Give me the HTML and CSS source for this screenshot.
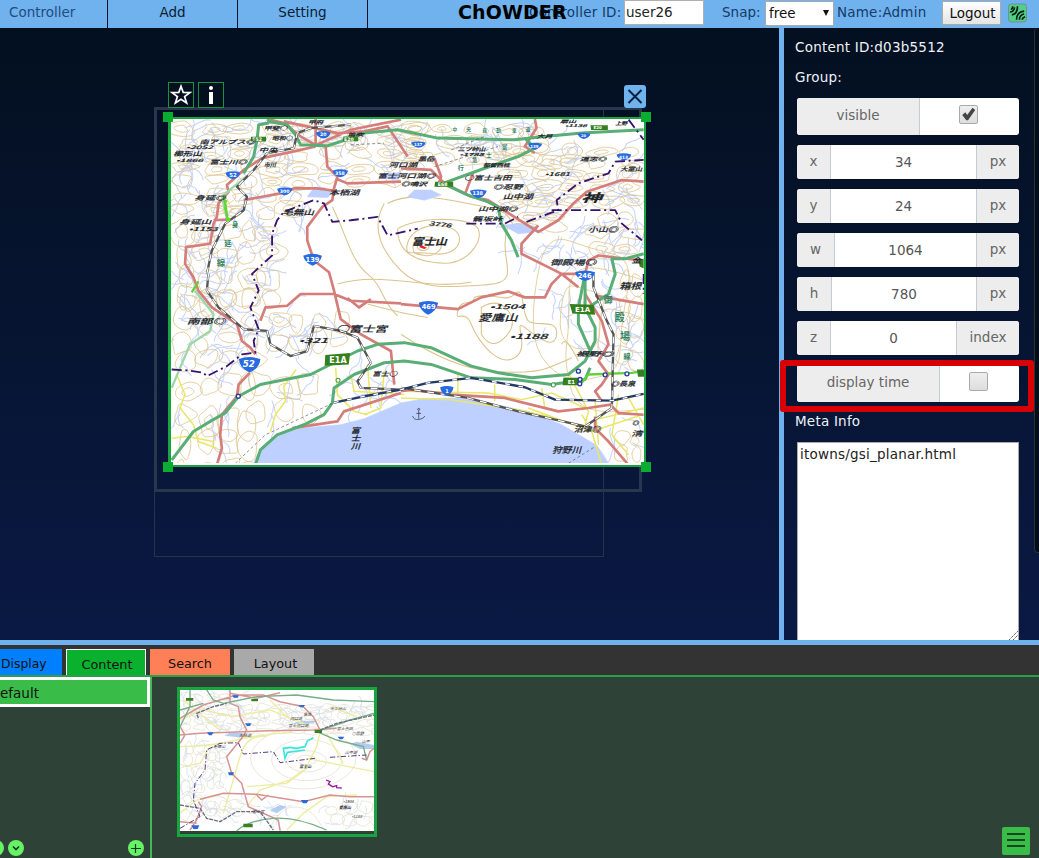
FILE: index.html
```html
<!DOCTYPE html>
<html lang="ja">
<head>
<meta charset="utf-8">
<title>ChOWDER</title>
<link rel="stylesheet" href="styles.css">
</head>
<body>
<div class="app">
  <header class="topbar">
    <nav class="menu">
      <span class="menu-item menu-first">Controller</span>
      <span class="menu-item">Add</span>
      <span class="menu-item">Setting</span>
    </nav>
    <h1 class="brand">ChOWDER</h1>
    <div class="tools">
      <span class="lbl lbl-id">Controller ID:</span>
      <span class="id-input">user26</span>
      <span class="lbl lbl-snap">Snap:</span>
      <span class="select"><span>free</span><i class="caret"></i></span>
      <span class="lbl lbl-name">Name:Admin</span>
      <span class="logout">Logout</span>
      <svg class="signal" viewBox="0 0 20 20"><rect x=".5" y=".5" width="19" height="19" rx="3" fill="#50cf87" stroke="#789"/><g fill="none" stroke="#061b12" stroke-width="1.7"><path d="M2 9Q6 9 7 4M3 6Q5 6 5 3M4 12Q10 11 10 3M9 17Q9 9 17 8M12 17Q12 12 17 11M15 17Q15 15 18 14"/></g></svg>
    </div>
  </header>

  <main class="main">
    <section class="stage">
      <div class="screen screen-thin"></div>
      <div class="screen screen-thick"></div>
      <div class="tool-icon star"><svg viewBox="0 0 24 24"><path d="M12 3.200 14.200 9.400 21 9.600 15.600 13.600 17.600 20 12 16.200 6.400 20 8.400 13.600 3 9.600 9.800 9.400Z" fill="none" stroke="#fff" stroke-width="1.7"/></svg></div>
      <div class="tool-icon info"><svg viewBox="0 0 24 24"><circle cx="12" cy="5" r="2" fill="#fff"/><rect x="10" y="9" width="4" height="12" fill="#fff"/></svg></div>
      <div class="close"><svg viewBox="0 0 22 22"><path d="M4.500 4.500 17.500 17.500M17.500 4.500 4.500 17.500" stroke="#08203f" stroke-width="2"/></svg></div>
      <div class="content-frame">
        <svg class="map" viewBox="63 138 1413 1026" preserveAspectRatio="none">
          <rect x="60" y="130" width="1430" height="1045" fill="#fff"/>
          <g id="streams" class="stream"></g>
          <g id="contours" class="contour"></g>
          <!-- contour rings of Mt. Fuji and its foothills -->
          <g class="contour big">
            <path d="M545 400C590 490 600 560 650 600S690 680 740 725M700 390C660 460 690 530 750 590S900 640 1010 632 1035 560 1070 455M740 465C800 430 930 430 970 455S960 570 880 568 740 540 740 465M768 515C775 470 830 445 890 460S930 550 850 540 765 550 768 515M786 520C785 490 830 480 860 500S850 550 820 545 786 540 786 520M798 520C805 505 825 505 832 517S810 538 798 520"/>
            <path d="M710 390C780 350 900 380 1000 400S1060 440 1100 470M560 630C700 590 820 650 960 625"/>
            <path d="M970 670C1020 650 1060 690 1090 660S1110 720 1130 740 1220 730 1215 780 1160 790 1120 760 1140 820 1090 850 980 800 960 750 910 750 920 710 960 700 970 670ZM990 700Q1040 670 1070 710T1060 790T990 780Z"/>
            <path d="M650 690Q760 720 830 730M750 780Q900 880 1020 890T1190 880T1260 850M1230 810Q1240 780 1280 860"/>
          </g>
          <!-- sea and lakes -->
          <g class="water">
            <path d="M305 1175 320 1140 345 1105 400 1075 450 1060 570 1050 640 1032 750 985 820 972 920 970 1010 985 1130 1010 1230 1050 1290 1085 1335 1112 1355 1140 1375 1175Z"/>
            <path d="M485 350 520 342 545 358 530 372 470 370ZM770 370 790 350 840 350 870 365 820 380ZM1055 455 1100 450 1160 460 1150 475 1100 480ZM685 302 750 298 740 318 690 315Z"/>
          </g>
          <g class="yellow">
            <path d="M80 900 105 960 90 1000 130 1050 145 1100 200 1120M65 1090 110 1085 190 1100M437 885 400 935 405 980 375 1020 360 1070M555 880 560 960 610 1010 650 1020M600 900 610 950 760 960M650 870 660 1000M700 890 690 1000 640 1020M750 950 1010 955 1110 975 1200 955 1300 1000M750 970 900 975 1100 1005 1230 1035M920 900 920 960M1030 930 1030 980M1170 940 1180 1000M1250 895 1310 1010 1300 1050M1330 980 1340 1110M1400 960 1380 1080 1430 1140M1430 970 1475 1050M1330 1035 1475 1000M1290 1020 1320 1070 1350 1170M1130 1000 1320 1070 1470 1020"/>
          </g>
          <g class="road">
            <path d="M350 138 400 150 450 190 495 216 600 170 750 140M495 138 495 216 525 220 530 280 560 310 550 345 545 380 515 400 470 460 470 500 490 560 535 595 550 650 570 735 630 780 720 830 730 930M495 220 450 230 335 255 280 290 230 335 235 355 205 390 200 430 190 450 180 510 108 520 105 570 130 610 145 650 185 700 260 750 275 800 300 820 315 840M230 438 190 440M400 145 560 180 640 175 710 160 770 250M560 318 590 330 750 325M280 380 390 360 430 345 500 345 550 352M330 740 345 700 410 695 450 660 550 660 600 680 750 688"/>
            <path d="M590 672 625 700 660 675M298 895 265 930 260 965 215 1020 210 1080 215 1120 200 1170M425 1060 560 1040 580 1010 750 955"/>
            <path d="M750 690 920 705 990 670 1070 652 1120 670 1180 670 1200 630 1230 600M750 285 840 290 880 330 960 370 1010 380 1160 475 1220 440 1265 390 1305 355 1410 320 1475 325M1150 138 1155 165 1120 220 1150 240M860 340 870 310 850 255M940 365 965 300M1160 455 1110 510 1110 540 1230 600 1280 640M1230 600 1300 600 1310 560 1340 545 1470 560M1330 665 1475 690M1300 660 1350 740 1370 810 1340 860 1370 900 1350 930 1330 950 1350 980"/>
            <path d="M750 950 780 945 900 960 1060 970 1220 1010 1310 1000 1375 990 1400 1015 1475 1020M1330 1060 1370 1100 1430 1170M1330 1060 1330 1025"/>
          </g>
          <g class="expressway">
            <path d="M355 150 325 155 320 200 310 250 280 300M350 145 410 155 435 185 450 215 530 218 570 205 640 180 740 170 860 195 1090 200 1180 190 1290 180 1475 170M1120 195 1150 225 1100 250 1000 285 875 330 950 365 1010 385 1040 400 1050 450 1080 500 1100 550M1475 540 1420 555 1380 555 1390 600 1370 660 1310 700"/>
            <path class="pale" d="M230 435 215 370 250 340 290 310M135 650 190 720 180 770 120 810 65 940"/>
            <path d="M65 1155 130 1070 180 1040 225 1015 265 965 330 930 480 900 550 865 620 830 680 810 760 805 840 820 960 875 1040 895 1140 910 1250 900 1300 860 1330 800 1330 760 1300 700 1300 600"/>
            <path d="M315 1170 330 1125 380 1080 460 1050 520 1020 545 985 550 940 610 900 700 865 760 860 840 870 960 910 1090 915 1200 930 1300 915 1315 880M1300 600 1280 700 1280 750 1320 840"/>
            <path class="lime" d="M125 655 145 622M232 438 225 390 220 370M1290 925 1310 900 1440 895 1475 890"/>
          </g>
          <g class="rail-dark">
            <path id="rail" d="M175 600 170 650 205 700 280 765 350 770 360 810 420 845 470 830 490 755 570 770 620 790 660 865M660 865 620 920 630 940 750 945M170 600 185 530 225 450 280 410 290 370 260 340 310 290 350 240 430 225 440 180 480 165 600 155M1325 600 1325 640 1365 740 1385 780 1380 1000M1380 1000 1300 1055 1100 1010 950 970 750 940"/>
            <path class="rail-white" d="M175 600 170 650 205 700 280 765 350 770 360 810 420 845 470 830 490 755 570 770 620 790 660 865M660 865 620 920 630 940 750 945M170 600 185 530 225 450 280 410 290 370 260 340 310 290 350 240 430 225 440 180 480 165 600 155M1325 600 1325 640 1365 740 1385 780 1380 1000M1380 1000 1300 1055 1100 1010 950 970 750 940"/>
          </g>
          <path class="shinkansen" d="M550 984 640 965 750 945 830 925 960 910 1120 938 1210 975 1380 978 1475 958"/>
          <path class="shinkansen-dash" d="M550 984 640 965 750 945 830 925 960 910 1120 938 1210 975 1380 978 1475 958"/>
          <path class="tunnel" d="M255 1165 345 1080 550 984M1250 1165 1330 1115M900 230 1000 190M850 280 1040 220M600 215 700 210"/>
          <path class="boundary" d="M65 885 115 888 160 895 170 905 230 875 275 840 315 835 310 800 325 765 300 700 325 650 305 600 365 545 365 480 380 440 400 415 490 380 520 390 545 445 600 440 680 430 710 485 800 465M945 450 1060 450 1100 430M1125 445 1220 410 1215 380 1280 330 1370 300 1390 265 1475 260M1200 410 1390 410 1410 450 1470 500M1475 600V660M1430 140 1475 200"/>
          <g class="shields">
            <path d="M496 178q22-8 44 0q-4 16-22 18q-20-4-22-18ZM226 298q22-8 44 0q-4 16-22 20q-20-6-22-20ZM546 292q22-8 46 0q-4 16-24 20q-20-6-22-20ZM380 346q22-8 46 0q-4 16-24 20q-20-6-22-20ZM458 546q28-12 56 0q-4 20-28 30q-24-10-28-30ZM266 854q30-12 64 0q-2 28-32 40q-32-14-32-40ZM803 686q28-10 58 0q-4 24-30 36q-24-12-28-36ZM867 938q20-8 40 0q-2 16-20 26q-18-8-20-26ZM1270 595q30-10 60 0q-4 20-30 26q-26-6-30-26ZM780 208q22-6 44 0q-4 14-22 16q-18-4-22-16ZM1278 182q18-6 38 0q-2 12-20 16q-16-4-18-16ZM1130 212q18-6 42 0q-4 12-22 18q-18-6-20-18ZM1394 244q20-8 44 0q-4 14-22 18q-20-6-22-18ZM956 352q22-8 50 0q-4 18-26 22q-20-6-24-22Z"/>
            <g class="shield-text"><text x="508" y="190" font-size="14">20</text><text x="237" y="312" font-size="16">52</text><text x="553" y="306" font-size="14">358</text><text x="388" y="359" font-size="14">300</text><text x="465" y="564" font-size="20">139</text><text x="277" y="879" font-size="26" font-style="italic">52</text><text x="812" y="706" font-size="20">469</text><text x="882" y="956" font-size="15">1</text><text x="1278" y="612" font-size="20">246</text><text x="789" y="218" font-size="12">137</text><text x="1288" y="192" font-size="11">20</text><text x="1136" y="224" font-size="12">139</text><text x="1401" y="257" font-size="13">413</text><text x="964" y="366" font-size="15">138</text></g>
          </g>
          <g class="route"><path d="M302 191h45v14h-46zM578 190h44v14h-46zM524 842 598 836 594 870 522 874ZM1254 690 1326 692 1330 722 1262 718ZM852 325h54v15h-56zM1316 157h52v14h-50zM1235 910h46v22h-48zM1455 885h25v22h-22zM1460 560l15-6v30l-12-6z"/><g class="shield-text"><text x="306" y="204" font-size="14">E52</text><text x="580" y="203" font-size="14">E20</text><text x="536" y="865" font-size="24">E1A</text><text x="1270" y="714" font-size="21">E1A</text><text x="860" y="338" font-size="14">E68</text><text x="1325" y="169" font-size="12">E20</text><text x="1248" y="928" font-size="16">E1</text></g></g>
          <g class="names">
            <text x="148" y="214" font-size="17" textLength="165">南アルプス◎</text><text x="70" y="247" font-size="19" textLength="85">櫛形山</text><text x="108" y="229" font-size="14" textLength="80">•2052</text><text x="178" y="273" font-size="16" textLength="112">富士川◎</text><text x="78" y="266" font-size="13" textLength="80">•1866</text><text x="325" y="236" font-size="16" textLength="55">中央</text><text x="365" y="201" font-size="15" textLength="60">昭和○</text><text x="340" y="171" font-size="15" textLength="70">甲斐○</text><text x="472" y="153" font-size="14" textLength="45">甲府</text><text x="590" y="190" font-size="12" textLength="48">笛吹</text>
            <text x="133" y="381" font-size="18" textLength="92">身延◎</text><text x="88" y="450" font-size="18" textLength="95">身延山</text><text x="116" y="472" font-size="16" textLength="86">•1153</text><text x="395" y="423" font-size="22" textLength="95">毛無山</text><text x="535" y="364" font-size="20" textLength="90">本栖湖</text><text x="340" y="280" font-size="18" textLength="36">市川</text>
            <text x="713" y="280" font-size="18" textLength="85">河口湖</text><text x="800" y="263" font-size="17" textLength="50">黒岳</text><text x="680" y="314" font-size="18" textLength="172">富士河口湖◎</text><text x="750" y="338" font-size="16" textLength="78">◎鳴沢</text><text x="938" y="320" font-size="18" textLength="142">○富士吉田</text><text x="1025" y="348" font-size="18" textLength="88">◎忍野</text><text x="1054" y="377" font-size="20" textLength="90">山中湖</text><text x="980" y="413" font-size="17" textLength="118">山中湖◎</text><text x="963" y="441" font-size="17" textLength="90">籠坂峠</text><text x="920" y="232" font-size="16" textLength="82">三ツ峠山</text><text x="925" y="248" font-size="12" textLength="72">•1785</text><text x="995" y="281" font-size="15" textLength="80">都留西桂</text><text x="1155" y="196" font-size="15" textLength="48">大月</text><text x="1225" y="150" font-size="12" textLength="48">扇山</text><text x="1240" y="162" font-size="11" textLength="65">•1138</text><text x="1390" y="157" font-size="14" textLength="36">上野</text><text x="1285" y="264" font-size="15" textLength="78">道志◎</text><text x="1180" y="308" font-size="15" textLength="75">•1681</text><text x="1405" y="292" font-size="16" textLength="65">大室山</text>
            <text x="1288" y="386" font-size="34" textLength="62" font-weight="bold">神</text><text x="1308" y="476" font-size="20" textLength="90">小山◎</text><text x="1195" y="572" font-size="21" textLength="138">御殿場◎</text><text x="1438" y="568" font-size="20" textLength="30">金</text><text x="1402" y="646" font-size="25" textLength="66">箱根</text>
            <text x="782" y="513" font-size="29" font-weight="bold" textLength="105">富士山</text><text x="832" y="454" font-size="16" textLength="68" transform="rotate(7 832 454)">3776</text><text x="110" y="748" font-size="22" textLength="115">南部◎</text><text x="556" y="772" font-size="25" textLength="152">○富士宮</text><text x="445" y="805" font-size="20" textLength="86">•321</text><text x="980" y="740" font-size="28" textLength="118">愛鷹山</text><text x="1015" y="704" font-size="19" textLength="105">•1504</text><text x="1075" y="793" font-size="21" textLength="112">•1188</text><text x="664" y="906" font-size="18" textLength="74">富士○</text><text x="1272" y="846" font-size="18" textLength="112">裾野◎</text><text x="1376" y="934" font-size="19" textLength="74">◎長泉</text><text x="1266" y="1073" font-size="22" textLength="80">沼津◎</text><text x="1202" y="1135" font-size="25" textLength="86">狩野川</text><text x="1437" y="1082" font-size="20" textLength="34">清</text><text x="1440" y="1051" font-size="16" textLength="20">◎</text><text x="600" y="1074" font-size="22" textLength="28">富</text><text x="600" y="1098" font-size="22" textLength="28">士</text><text x="600" y="1122" font-size="22" textLength="28">川</text>
          </g>
          <g class="green-names"><text x="904" y="175" font-size="14">中</text><text x="945" y="175" font-size="14">央</text><text x="993" y="177" font-size="14">自</text><text x="1035" y="178" font-size="14">動</text><text x="1082" y="178" font-size="14">車</text><text x="1122" y="175" font-size="14">道</text><text x="245" y="460" font-size="19">身</text><text x="222" y="516" font-size="22">延</text><text x="200" y="577" font-size="25">線</text><text x="1355" y="688" font-size="27">御</text><text x="1388" y="740" font-size="30">殿</text><text x="1404" y="797" font-size="30">場</text><text x="1415" y="853" font-size="21">線</text><text x="1052" y="228" font-size="16">富</text><text x="1005" y="250" font-size="16">士</text><text x="962" y="267" font-size="16">急</text><text x="920" y="290" font-size="18">行</text></g>
          <path d="M803 1008v24m-18-8q3 12 18 10t18-10m-25-8h14" fill="none" stroke="#223" stroke-width="2"/><circle cx="803" cy="1004" r="3" fill="none" stroke="#223" stroke-width="2"/>
          <g class="junction"><circle cx="264" cy="965" r="6"/><circle cx="1280" cy="890" r="6"/><circle cx="1285" cy="915" r="6"/><circle cx="1284" cy="928" r="6"/><circle cx="1360" cy="901" r="6"/><circle cx="1425" cy="898" r="6"/></g>
          <g class="junction green"><circle cx="562" cy="917" r="6"/><circle cx="1205" cy="931" r="6"/></g>
          <path d="M804 520l8-6 8 5 8 3-9 4z" fill="#ed1c24"/>
          <g fill="#5cdf18"><circle cx="226" cy="383" r="5"/><circle cx="226" cy="405" r="5"/><circle cx="234" cy="438" r="6"/></g>
        </svg>
      </div>
      <i class="handle h-tl"></i><i class="handle h-tr"></i><i class="handle h-bl"></i><i class="handle h-br"></i>
    </section>

    <aside class="props">
      <p class="prop-title">Content ID:d03b5512</p>
      <p class="prop-title">Group:</p>
      <div class="rows">
        <div class="row tall"><span class="cell key k-visible">visible</span><span class="cell val"><i class="check"><svg viewBox="0 0 19 19"><path d="M2.500 10 6 7 8 10 14 2 17 4.500 9 16 7 16Z" fill="#444"/></svg></i></span></div>
        <div class="row"><span class="cell key k-x">x</span><span class="cell val">34</span><span class="cell unit">px</span></div>
        <div class="row"><span class="cell key k-x">y</span><span class="cell val">24</span><span class="cell unit">px</span></div>
        <div class="row"><span class="cell key k-w">w</span><span class="cell val">1064</span><span class="cell unit">px</span></div>
        <div class="row"><span class="cell key k-h">h</span><span class="cell val">780</span><span class="cell unit">px</span></div>
        <div class="row"><span class="cell key k-x">z</span><span class="cell val">0</span><span class="cell unit u-index">index</span></div>
        <div class="row tall"><span class="cell key k-time">display time</span><span class="cell val"><i class="check off"></i></span></div>
      </div>
      <p class="prop-title meta">Meta Info</p>
      <div class="memo">itowns/gsi_planar.html<svg class="grip" viewBox="0 0 10 10"><path d="M1 10 10 1M5 10 10 5" stroke="#555" stroke-width="1" stroke-dasharray="1.500 .7"/></svg></div>
      <div class="scrollbar"></div>
      <div class="highlight"></div>
    </aside>
  </main>

  <section class="bottom">
    <div class="tabs">
      <span class="tab t-display">Display</span>
      <span class="tab t-content">Content</span>
      <span class="tab t-search">Search</span>
      <span class="tab t-layout">Layout</span>
    </div>
    <div class="shelf">
      <div class="groups">
        <div class="group">efault</div>
        <div class="group-tools">
          <svg class="round cut" viewBox="0 0 16 16"><circle cx="8" cy="8" r="8" fill="#66f266"/></svg>
          <svg class="round" viewBox="0 0 16 16"><circle cx="8" cy="8" r="8" fill="#66f266"/><path d="M5 6.500 8 9.500 11 6.500" fill="none" stroke="#123a1c" stroke-width="1.600"/></svg>
          <svg class="round plus" viewBox="0 0 16 16"><circle cx="8" cy="8" r="8" fill="#66f266"/><path d="M3 8.500H13M7.500 4V13" stroke="#123a1c" stroke-width="1.200"/></svg>
        </div>
      </div>
      <div class="items">
        <div class="thumb">
          <svg viewBox="30 30 582 423" preserveAspectRatio="none">
            <rect x="30" y="30" width="582" height="423" fill="#fff"/>
            <g id="thumb-streams" class="t-stream"></g>
            <g id="thumb-contours" class="t-contour"></g>
            <g class="t-contour"><ellipse cx="410" cy="240" rx="30" ry="14"/><ellipse cx="410" cy="244" rx="60" ry="32"/><ellipse cx="410" cy="240" rx="105" ry="62"/><ellipse cx="400" cy="235" rx="158" ry="92"/></g>
            <g class="t-water"><path d="M165 168 180 157 220 160 210 172ZM365 132 390 122 440 123 430 130ZM540 192 560 185 612 195V207H570ZM300 390 330 375 350 380 320 400Z"/></g>
            <g class="t-yellow"><path d="M30 200Q120 200 200 180T370 158M160 400Q190 300 210 230T290 170M230 320 350 310 405 270 440 200 450 160M410 235 612 275M400 270 360 300 270 330 230 380M30 400 80 360 150 345M350 450 400 400 470 350 560 345M30 120 100 90 190 110 300 90 400 130M120 200 90 250 40 260M40 60 100 110 150 150M300 60 350 110 420 140M480 80 560 110M470 160 520 250"/></g>
            <g class="t-road"><path d="M30 165 90 160 180 157 300 152 430 150 500 145M180 30 180 70 205 80 210 110 230 150 215 175 170 230 185 280 215 310 235 380 325 420 330 452M90 358 160 340 260 343 400 365 480 345 540 350 612 350M30 115 100 75 200 45 280 45 330 65 400 80 430 110 450 150M180 40 260 55 330 38M30 190 45 165 30 140M260 345 275 360 295 345M575 235 590 240 600 215 612 205M60 450 80 420 95 380 85 365M30 425 80 430"/></g>
            <g class="t-green"><path d="M60 30 60 80 30 140M110 30 130 60 160 70 260 50 380 45 490 60 612 65M612 100 540 120 440 155 500 180 580 200 590 240M200 452Q240 420 310 415T470 450M30 90 100 70"/></g>
            <path class="t-rail" d="M85 115 80 100 130 80 170 70M30 375 90 385 110 415 150 425 200 395 270 395 310 450M450 150 500 130 612 105"/>
            <path class="t-boundary" d="M30 445 90 410 70 360 75 310 105 270 110 210 150 190 205 188 220 222 310 215 330 248 435 235M480 232 590 225"/>
            <path d="M430 173 412 183 405 200 378 205 362 202 340 205 345 235 352 217 405 210" fill="none" stroke="#3ce5dc" stroke-width="5"/>
            <path d="M468 300 480 305 475 312 488 320 500 317 500 323 515 324" fill="none" stroke="#9b179b" stroke-width="4"/>
            <g fill="#2e68d8"><path d="M187 46h20l-4 7h-12zM385 75h20l-5 7h-9zM225 130h20l-6 8h-8zM111 157h20l-6 9h-8zM503 170h20l-6 8h-8zM174 277h18l-3 9h-12zM392 360h24l-6 10h-11zM64 436h24l-5 11h-13z"/></g>
            <g fill="#3a801f"><path d="M48 54h22v8H48zM244 57h20v7h-20zM434 150h22v9h-22zM220 431h28v11h-28z"/></g>
            <g class="t-names"><text x="360" y="121">河口湖</text><text x="355" y="142">富士河口湖</text><text x="400" y="107">黒岳</text><text x="480" y="91">三ツ峠山</text><text x="500" y="150">富士吉田</text><text x="545" y="166">◎忍野</text><text x="575" y="188">山中</text><text x="525" y="223">山中湖</text><text x="388" y="265" font-weight="bold">富士山</text><text x="207" y="170">本栖湖</text><text x="130" y="204">毛無山</text><text x="507" y="388" font-weight="bold">愛鷹山</text><text x="520" y="370">•1504</text><text x="545" y="415">•1188</text><text x="235" y="398">○富士宮</text></g>
          </svg>
        </div>
        <div class="burger"><i></i><i></i><i></i></div>
      </div>
    </div>
  </section>
</div>
<script src="terrain.js"></script>
</body>
</html>
```
FILE: styles.css
```css
* { box-sizing: border-box; }
body { margin: 0; overflow: hidden; font-family: "DejaVu Sans", "Noto Sans CJK JP", sans-serif; font-size: 13.5px; }
.app { width: 1039px; height: 858px; display: flex; flex-direction: column; overflow: hidden; }
.topbar { position: relative; height: 28px; flex: none; display: flex; justify-content: space-between; background: #6fb2ee; color: #0b2545; }
.menu { display: flex; }
.menu-item { width: 130px; height: 28px; border-right: 1px solid #061326; text-align: center; line-height: 25px; color: #0a1c30; }
.menu-first { width: 108px; padding-left: 9px; text-align: left; color: #234b7d; }
.brand { position: absolute; left: 458px; top: 0; margin: 0; font-size: 19px; line-height: 25px; letter-spacing: .1px; color: #000; }
.tools { display: flex; width: 513px; height: 26px; align-items: center; color: #173a66; }
.lbl { line-height: 24px; height: 26px; white-space: nowrap; }
.lbl-id { width: 98px; padding-left: 3px; letter-spacing: .2px; }
.id-input { width: 80px; height: 25px; margin-bottom: 1px; background: #fff; border: 1px solid #b0b0b0; padding-left: 1px; line-height: 22px; color: #222; }
.lbl-snap { width: 61px; padding-left: 18px; }
.select { width: 69px; height: 25px; background: #fff; border: 1px solid #aaa; display: flex; justify-content: space-between; align-items: center; padding: 0 4px 0 3px; color: #111; }
.caret { border: 3px solid transparent; border-top: 6px solid #111; border-bottom: 0; }
.lbl-name { width: 95px; padding-left: 3px; margin-right: 13px; letter-spacing: .2px; }
.logout { width: 59px; height: 24px; border: 1px solid #aaa; background: linear-gradient(#fff, #e4e4e4); line-height: 23px; text-align: center; padding-left: 2px; color: #111; }
.signal { width: 19px; height: 20px; margin-left: 7px; flex: none; }
.main { height: 612px; flex: none; display: flex; background: linear-gradient(#031020, #0a1944); }
.stage { position: relative; width: 779px; }
.screen { position: absolute; }
.screen-thin { left: 154px; top: 80px; width: 450px; height: 449px; border: 1px solid #26344b; }
.screen-thick { left: 154px; top: 79px; width: 488px; height: 385px; border: 3px solid #28374b; }
.tool-icon { position: absolute; top: 54px; width: 26px; height: 26px; border: 1px solid #16933b; background: #041020; }
.tool-icon svg, .close svg, .check svg, .map, .thumb svg { display: block; width: 100%; height: 100%; }
.star { left: 168px; }
.info { left: 198px; }
.close { position: absolute; left: 624px; top: 57px; width: 22px; height: 23px; border-radius: 3px; background: #6fb2ee; }
.content-frame { position: absolute; left: 168px; top: 89px; width: 478px; height: 350px; border: 2px solid #18a53f; border-left-width: 3px; background: #fff; padding-bottom: 2px; }
.handle { position: absolute; width: 10px; height: 10px; background: #0bad31; }
.h-tl, .h-tr { top: 84px; }
.h-bl, .h-br { top: 434px; }
.h-tl, .h-bl { left: 163px; }
.h-tr, .h-br { left: 641px; }
.map path { stroke-linejoin: round; }
.contour, .t-contour { fill: none; stroke: #dfc791; stroke-width: 2.5; }
.contour.big { stroke: #dcc38d; stroke-width: 3.2; }
.stream { fill: none; stroke: #c6d3fa; stroke-width: 3; }
.water { fill: #bed0ff; stroke: #bed0ff; stroke-width: 2; }
.yellow { fill: none; stroke: #eae766; stroke-width: 4.5; }
.road { fill: none; stroke: #d57e79; stroke-width: 8; }
.expressway { fill: none; stroke: #58ae74; stroke-width: 9; }
.expressway .pale { stroke: #9bd7ab; stroke-width: 7; }
.expressway .lime { stroke: #66cf3a; stroke-width: 7; }
.rail-dark { fill: none; stroke: #555; stroke-width: 7; }
.rail-white { stroke: #fff; stroke-width: 3.5; stroke-dasharray: 20 20; }
.shinkansen { fill: none; stroke: #253964; stroke-width: 7; }
.shinkansen-dash { fill: none; stroke: #fff; stroke-width: 4; stroke-dasharray: 14 26; }
.tunnel { fill: none; stroke: #555b66; stroke-width: 2; stroke-dasharray: 9 7; }
.boundary { fill: none; stroke: #35136e; stroke-width: 5.5; stroke-dasharray: 30 11 6 11; }
.shields > path { fill: #286ae0; }
.route > path { fill: #35801e; }
.shield-text { fill: #fff; font-weight: bold; font-family: "DejaVu Sans", sans-serif; }
.names { fill: #20242a; font-family: "Noto Sans CJK JP", sans-serif; font-weight: 500; }
.names text { font-style: italic; stroke: #20242a; stroke-width: .5; }
.green-names { fill: #348365; font-family: "Noto Sans CJK JP", sans-serif; font-weight: bold; }
.junction { fill: #fff; stroke: #253c9d; stroke-width: 4; }
.junction.green { stroke: #3b9a3d; stroke-width: 3; }
.props { position: relative; width: 260px; height: 612px; border-left: 5px solid #6fb2ee; padding: 4px 20px 0 13px; overflow: visible; }
.prop-title { margin: 0 0 0 -2px; height: 30px; line-height: 30px; color: #edf2f8; white-space: nowrap; letter-spacing: .22px; }
.rows { display: grid; row-gap: 10px; padding-top: 6px; }
.row { display: flex; height: 34px; border-radius: 3px; overflow: hidden; background: #fff; color: #555; }
.row.tall { height: 37px; }
.cell { display: flex; align-items: center; justify-content: center; padding-bottom: 3px; }
.key, .unit { background: #ededed; color: #666; flex: none; }
.key { border-right: 1px solid #c5cbd2; }
.unit { width: 43px; border-left: 1px solid #c5cbd2; }
.val { flex: 1; padding: 0; }
.k-visible { width: 123px; }
.k-x { width: 34px; }
.k-w { width: 38px; }
.k-h { width: 35px; }
.u-index { width: 63px; }
.k-time { width: 143px; }
.check { width: 19px; height: 19px; margin: 0 2px 4px 0; border: 1px solid #aaa; border-radius: 2px; background: linear-gradient(#eee, #ddd); }
.meta { height: 40px; line-height: 38px; }
.memo { position: relative; width: 222px; height: 198px; background: #fff; border: 1px solid #aaa; border-bottom: 0; padding: 2px; line-height: 19px; letter-spacing: .22px; color: #222; }
.grip { position: absolute; right: 0; bottom: 0; width: 10px; height: 10px; }
.scrollbar { position: absolute; left: 250px; top: 0; width: 10px; height: 525px; background: #020d19; border-left: 1px solid #293332; border-bottom: 1px solid #293332; border-radius: 4px; }
.highlight { position: absolute; left: -4px; top: 332px; width: 254px; height: 52px; border: 6px solid #d70004; border-radius: 3px; }
.bottom { height: 218px; flex: none; border-top: 5px solid #6fb2ee; display: flex; flex-direction: column; background: #2e4237; }
.tabs { height: 32px; flex: none; display: flex; align-items: flex-end; background: #333; border-bottom: 2px solid #2f9e45; gap: 4px; font-size: 12.8px; color: #111; }
.tab { width: 80px; height: 26px; line-height: 29px; text-align: center; }
.t-display { width: 62px; background: #0080ff; text-align: left; padding-left: 1px; font-size: 12.4px; }
.t-content { background: #0ab12f; border: 1px solid #fff; border-bottom: 0; padding-left: 2px; }
.t-search { background: #ff8056; }
.t-layout { background: #a9a9a9; padding-left: 3px; }
.shelf { flex: 1; display: flex; }
.groups { width: 152px; border-right: 2px solid #43b855; display: flex; flex-direction: column; justify-content: space-between; }
.group { height: 30px; background: #39bd48; border: 3px solid #fff; border-left: 0; line-height: 26px; color: #111; }
.group-tools { display: flex; height: 18px; }
.round { width: 16px; height: 16px; flex: none; }
.cut { margin-left: -12px; margin-right: 4px; }
.plus { margin-left: 104px; }
.items { flex: 1; display: flex; justify-content: space-between; align-items: flex-start; padding: 10px 9px 0 25px; }
.thumb { width: 200px; height: 150px; border: 3px solid #18a53f; padding-bottom: 3px; }
.burger { align-self: flex-end; width: 28px; height: 28px; margin-bottom: 3px; border-radius: 2px; background: #39bd48; display: flex; flex-direction: column; gap: 4px; padding: 6px 5px; }
.burger i { height: 2px; flex: none; background: #15471f; }
.t-contour { stroke: #e0dcc6; stroke-width: 2; }
.t-stream { fill: none; stroke: #d3def2; stroke-width: 2.5; }
.t-water { fill: #b4cdef; }
.t-yellow { fill: none; stroke: #edeca0; stroke-width: 4; }
.t-road { fill: none; stroke: #d79391; stroke-width: 4.5; }
.t-green { fill: none; stroke: #75ad86; stroke-width: 4; }
.t-rail { fill: none; stroke: #687080; stroke-width: 4; stroke-dasharray: 12 3; }
.t-boundary { fill: none; stroke: #513b80; stroke-width: 3; stroke-dasharray: 16 6 4 6; }
.t-names { font: italic 12px "Noto Sans CJK JP", sans-serif; fill: #333; }
```
FILE: terrain.js
```js
// Map labels keep their set width by stretching the glyphs.
document.querySelectorAll(".names text[textLength]").forEach(t => t.setAttribute("lengthAdjust", "spacingAndGlyphs"));

// Deterministic terrain: contour rings and small streams.
let seed = 17;
const rnd = () => (seed = (seed * 16807) % 2147483647) / 2147483647;

function ring(cx, cy, rx, ry) {
  const n = 9, outer = [];
  for (let i = 0; i < n; i++) {
    const a = (i / n) * Math.PI * 2, k = 0.55 + rnd() * 0.65;
    outer.push([Math.cos(a) * rx * k, Math.sin(a) * ry * k]);
  }
  const trace = s => {
    const pts = outer.map(p => [cx + p[0] * s, cy + p[1] * s]);
    const mid = (a, b) => [((a[0] + b[0]) / 2).toFixed(1), ((a[1] + b[1]) / 2).toFixed(1)];
    let d = "M" + mid(pts[n - 1], pts[0]);
    for (let i = 0; i < n; i++) d += "Q" + pts[i].map(v => v.toFixed(1)) + " " + mid(pts[i], pts[(i + 1) % n]);
    return d + "Z";
  };
  return `<path d="${trace(1)}${rx > 42 ? trace(0.45) : ""}"/>`;
}

function stream(x, y, len, step) {
  let d = `M${x} ${y}`, a = rnd() * 6.3;
  for (let i = 0; i < len; i++) {
    a += (rnd() - 0.5) * 1.3;
    d += `l${(Math.cos(a) * step).toFixed(1)} ${(Math.sin(a) * step).toFixed(1)}`;
  }
  return `<path d="${d}"/>`;
}

// Rings sit on a jittered grid so that they rarely cross.
function fill(areas, step) {
  let rings = "", streams = "";
  for (const [x, y, w, h, gx, gy, m] of areas) {
    for (let i = x; i < x + w; i += gx)
      for (let j = y; j < y + h; j += gy)
        rings += ring(i + gx * (0.35 + rnd() * 0.4), j + gy * (0.35 + rnd() * 0.4), gx * (0.4 + rnd() * 0.3), gy * (0.4 + rnd() * 0.3));
    for (let i = 0; i < m; i++) streams += stream(x + rnd() * w, y + rnd() * h, 6, step);
  }
  return [rings, streams];
}

// [left, top, width, height, grid x, grid y, streams]
const [rings, streams] = fill([
  [66, 150, 420, 190, 84, 38, 50], [66, 345, 400, 90, 80, 45, 20], [66, 440, 320, 200, 64, 66, 40], [66, 650, 260, 240, 65, 60, 34],
  [340, 710, 190, 110, 63, 55, 16], [70, 900, 190, 250, 63, 83, 10], [270, 900, 240, 140, 80, 70, 8],
  [500, 150, 250, 150, 83, 37, 20], [750, 150, 350, 120, 87, 40, 24], [1040, 210, 430, 190, 86, 38, 34],
  [1080, 410, 160, 60, 80, 30, 6], [1310, 420, 160, 120, 80, 40, 20], [1390, 580, 86, 300, 43, 75, 16],
  [1380, 1070, 90, 90, 45, 45, 4], [590, 890, 150, 110, 400, 400, 16], [1080, 490, 200, 100, 400, 400, 14], [1180, 660, 120, 160, 400, 400, 12]
], 14);
document.getElementById("contours").innerHTML = rings;
document.getElementById("streams").innerHTML = streams;

const [smallRings, smallStreams] = fill([
  [32, 40, 180, 110, 36, 22, 30], [32, 180, 70, 240, 35, 40, 20], [110, 210, 50, 110, 25, 28, 12],
  [210, 70, 390, 70, 48, 23, 34], [470, 365, 130, 70, 43, 35, 8], [100, 355, 120, 60, 40, 30, 12], [250, 370, 100, 60, 300, 300, 12]
], 7);
document.getElementById("thumb-contours").innerHTML = smallRings;
document.getElementById("thumb-streams").innerHTML = smallStreams;
```
